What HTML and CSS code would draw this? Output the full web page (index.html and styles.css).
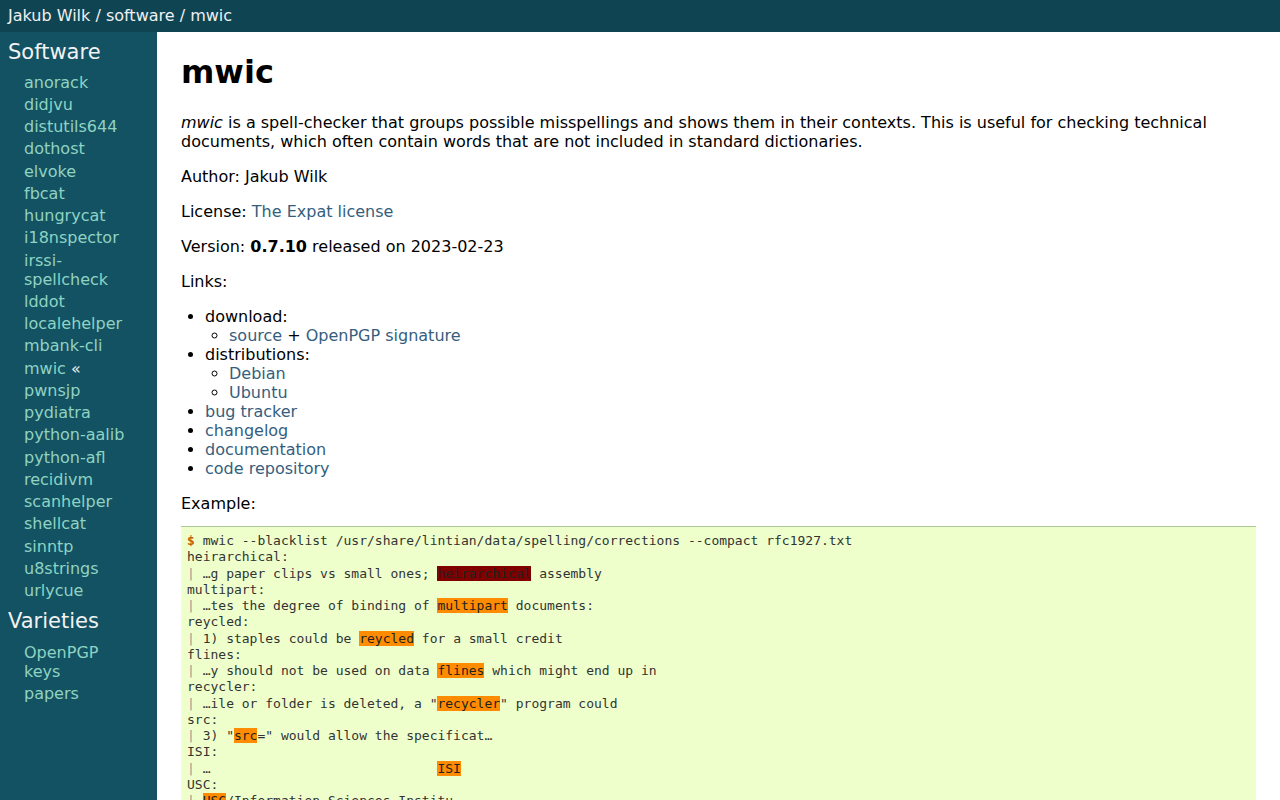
FILE: index.html
```html
<!DOCTYPE html>
<html lang="en">
<head>
<meta charset="utf-8">
<title>mwic</title>
<link rel="stylesheet" href="styles.css">
</head>
<body>
<header class="topbar"><a href="#">Jakub Wilk</a> / <a href="#">software</a> / <a href="#">mwic</a></header>
<div class="layout">
<nav class="sidebar">
<h2>Software</h2>
<ul>
<li><a href="#">anorack</a></li>
<li><a href="#">didjvu</a></li>
<li><a href="#">distutils644</a></li>
<li><a href="#">dothost</a></li>
<li><a href="#">elvoke</a></li>
<li><a href="#">fbcat</a></li>
<li><a href="#">hungrycat</a></li>
<li><a href="#">i18nspector</a></li>
<li><a href="#">irssi-spellcheck</a></li>
<li><a href="#">lddot</a></li>
<li><a href="#">localehelper</a></li>
<li><a href="#">mbank-cli</a></li>
<li><a href="#">mwic</a> <span class="current">«</span></li>
<li><a href="#">pwnsjp</a></li>
<li><a href="#">pydiatra</a></li>
<li><a href="#">python-aalib</a></li>
<li><a href="#">python-afl</a></li>
<li><a href="#">recidivm</a></li>
<li><a href="#">scanhelper</a></li>
<li><a href="#">shellcat</a></li>
<li><a href="#">sinntp</a></li>
<li><a href="#">u8strings</a></li>
<li><a href="#">urlycue</a></li>
</ul>
<h2 class="second">Varieties</h2>
<ul>
<li><a href="#">OpenPGP keys</a></li>
<li><a href="#">papers</a></li>
</ul>
</nav>
<main class="content">
<h1>mwic</h1>
<p><em>mwic</em> is a spell-checker that groups possible misspellings and shows them in their contexts. This is useful for checking technical documents, which often contain words that are not included in standard dictionaries.</p>
<p>Author: Jakub Wilk</p>
<p>License: <a href="#">The Expat license</a></p>
<p>Version: <strong>0.7.10</strong> released on 2023-02-23</p>
<p>Links:</p>
<ul class="links">
<li>download:
<ul><li><a href="#">source</a> + <a href="#">OpenPGP signature</a></li></ul>
</li>
<li>distributions:
<ul><li><a href="#">Debian</a></li><li><a href="#">Ubuntu</a></li></ul>
</li>
<li><a href="#">bug tracker</a></li>
<li><a href="#">changelog</a></li>
<li><a href="#">documentation</a></li>
<li><a href="#">code repository</a></li>
</ul>
<p class="example-label">Example:</p>
<pre class="example"><span class="prompt">$</span> mwic --blacklist /usr/share/lintian/data/spelling/corrections --compact rfc1927.txt
heirarchical:
<span class="bar">|</span> …g paper clips vs small ones; <span class="hl-dark">heirarchical</span> assembly
multipart:
<span class="bar">|</span> …tes the degree of binding of <span class="hl">multipart</span> documents:
reycled:
<span class="bar">|</span> 1) staples could be <span class="hl">reycled</span> for a small credit
flines:
<span class="bar">|</span> …y should not be used on data <span class="hl">flines</span> which might end up in
recycler:
<span class="bar">|</span> …ile or folder is deleted, a "<span class="hl">recycler</span>" program could
src:
<span class="bar">|</span> 3) "<span class="hl">src</span>=" would allow the specificat…
ISI:
<span class="bar">|</span> …                             <span class="hl">ISI</span>
USC:
<span class="bar">|</span> <span class="hl">USC</span>/Information Sciences Institu…
</pre>
</main>
</div>
</body>
</html>
```
FILE: styles.css
```css
html, body {
  margin: 0;
  padding: 0;
}
body {
  font-family: "DejaVu Sans", Verdana, sans-serif;
  font-size: 16px;
  line-height: 19px;
  color: #000;
  background: #fff;
}
a {
  text-decoration: none;
}
.topbar {
  background: #0f4453;
  color: #f0f0f0;
  padding: 6px 8px 7px;
  height: 19px;
}
.topbar a {
  color: #f0f0f0;
}
.layout {
  display: flex;
  min-height: calc(100vh - 32px);
}
.sidebar {
  flex: 0 0 157px;
  width: 157px;
  box-sizing: border-box;
  background: #135262;
  padding: 7.5px 20px 0 8px;
}
.sidebar h2 {
  font-size: 21px;
  line-height: 25px;
  font-weight: normal;
  color: #f2f2f2;
  margin: 0 0 8px;
}
.sidebar h2.second {
  margin-bottom: 9px;
}
.sidebar ul {
  list-style: none;
  margin: 0 0 8.75px 16px;
  padding: 0;
}
.sidebar li {
  margin: 0 0 3.25px;
}
.sidebar a {
  color: #8fd3c2;
}
.sidebar .current {
  color: #eaeaea;
}
.content {
  flex: 1;
  min-width: 0;
  padding: 0 24px;
}
.content h1 {
  font-size: 32px;
  line-height: 37px;
  font-weight: bold;
  margin: 21.5px 0 22px;
}
.content p {
  margin: 16px 0;
}
.content a {
  color: #355e7e;
}
.links {
  margin: 16px 0;
  padding-left: 24px;
}
.links ul {
  margin: 0;
  padding-left: 24px;
  list-style: circle;
}
.content p.example-label {
  margin-bottom: 13.5px;
}
.example {
  margin: 0;
  padding: 6px 6px 5px;
  background: #eeffcc;
  border-top: 1px solid #aacc99;
  border-bottom: 1px solid #aacc99;
  color: #333;
  font-family: "DejaVu Sans Mono", monospace;
  font-size: 13px;
  line-height: 16.27px;
  white-space: pre;
  overflow: hidden;
}
.prompt {
  color: #c65d09;
  font-weight: bold;
}
.bar {
  color: #999;
}
.hl {
  background: #ff8c00;
  color: #222;
}
.hl-dark {
  background: #800000;
  color: #222;
}
```
